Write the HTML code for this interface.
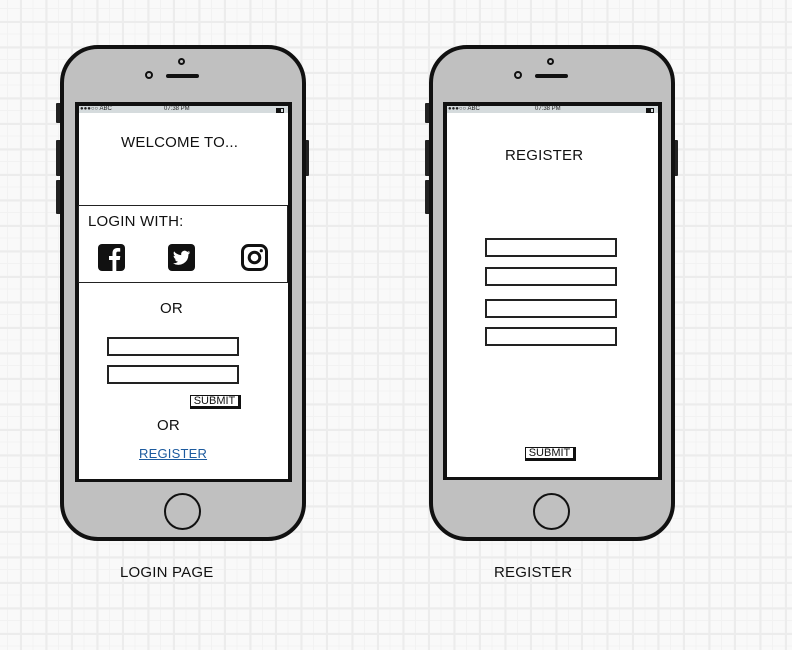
<!DOCTYPE html>
<html><head><meta charset="utf-8"><style>
*{margin:0;padding:0;box-sizing:border-box}
body{width:792px;height:650px;overflow:hidden;position:relative;font-family:"Liberation Sans",sans-serif;
background-color:#f9f9f9;
background-image:
linear-gradient(90deg,#ececec 2px,transparent 2px),
linear-gradient(#ececec 2px,transparent 2px),
linear-gradient(90deg,#f2f2f2 1px,transparent 1px),
linear-gradient(#f2f2f2 1px,transparent 1px);
background-size:25.5px 25.5px,25.5px 25.5px,12.75px 12.75px,12.75px 12.75px;
background-position:20px 21px,20px 21px,7px 8px,7px 8px;}
.a{position:absolute}
.phone{position:absolute;width:246px;height:496px;background:#c0c0c0;border:4px solid #111;border-radius:38px}
.btn{position:absolute;background:#222;border-radius:1px;width:5px}
.screen{position:absolute;background:#fff;border:4px solid #111;border-bottom-width:3px}
.sb{position:absolute;left:0;right:0;top:0;height:7px;background:#d5dbdd;font-size:6px;line-height:7px;color:#222}
.t{position:absolute;font-size:15px;color:#111;letter-spacing:0.2px;white-space:nowrap}
.field{position:absolute;border:2px solid #222;background:#fff}
.sub{position:absolute;border:1.5px solid #111;border-right-width:3px;border-bottom-width:3px;font-size:11px;line-height:11px;text-align:center;background:#fff;color:#111}
.home{position:absolute;width:37px;height:37px;border:2px solid #111;border-radius:50%}
</style></head><body>

<div class="btn" style="left:56px;top:103px;height:20px"></div>
<div class="btn" style="left:56px;top:140px;height:36px"></div>
<div class="btn" style="left:56px;top:180px;height:34px"></div>
<div class="btn" style="left:304px;top:140px;height:36px"></div>
<div class="phone" style="left:60px;top:45px"></div>
<div class="a" style="left:145px;top:71px;width:8px;height:8px;border:2px solid #111;border-radius:50%"></div>
<div class="a" style="left:166px;top:74px;width:33px;height:4px;background:#111;border-radius:2px"></div>
<div class="a" style="left:178px;top:58px;width:7px;height:7px;border:2px solid #111;border-radius:50%"></div>
<div class="screen" style="left:75px;top:102px;width:217px;height:380px">
 <div class="sb"><span style="position:absolute;left:1px">●●●○○ ABC</span><span style="position:absolute;left:85px">07:38 PM</span><span style="position:absolute;right:4px;top:1.5px;width:8px;height:5px;border:1px solid #111;background:linear-gradient(90deg,#111 70%,transparent 70%)"></span></div>
</div>
<div class="t" style="left:121px;top:134px">WELCOME TO...</div>
<div class="a" style="left:78px;top:205px;width:210px;height:78px;border:1.5px solid #222"></div>
<div class="t" style="left:88px;top:213px">LOGIN WITH:</div>
<svg class="a" style="left:98px;top:244px" width="27" height="27" viewBox="0 0 27 27"><rect width="27" height="27" rx="4" fill="#111"/><path d="M14.5 27V16h-3.5v-4h3.5V9c0-3.2 2-5 4.8-5 1.4 0 2.6.1 2.9.2v3.4h-2c-1.6 0-1.900.8-1.900 1.900V12h4l-.5 4h-3.5v11z" fill="#fff"/></svg>
<svg class="a" style="left:168px;top:244px" width="27" height="27" viewBox="0 0 27 27"><rect width="27" height="27" rx="4" fill="#111"/><path d="M22 8.3c-.6.3-1.3.5-2 .6.7-.4 1.3-1.1 1.5-1.9-.7.4-1.4.7-2.2.9a3.5 3.5 0 0 0-6 3.2c-2.9-.1-5.5-1.5-7.2-3.7-.9 1.6-.4 3.6 1.1 4.7-.6 0-1.1-.2-1.6-.4 0 1.7 1.2 3.2 2.8 3.5-.5.1-1.1.2-1.6.1.5 1.4 1.8 2.4 3.3 2.4A7 7 0 0 1 5 19.2a10 10 0 0 0 15.4-8.8c.6-.5 1.2-1.1 1.6-1.8z" fill="#fff"/></svg>
<svg class="a" style="left:241px;top:244px" width="27" height="27" viewBox="0 0 27 27"><rect x="1.5" y="1.5" width="24" height="24" rx="6" fill="none" stroke="#111" stroke-width="3"/><circle cx="13.5" cy="13.5" r="5.3" fill="none" stroke="#111" stroke-width="3"/><circle cx="20.3" cy="6.7" r="1.6" fill="#111"/></svg>
<div class="t" style="left:160px;top:300px">OR</div>
<div class="field" style="left:107px;top:337px;width:132px;height:19px"></div>
<div class="field" style="left:107px;top:365px;width:132px;height:19px"></div>
<div class="sub" style="left:190px;top:395px;width:51px;height:14px">SUBMIT</div>
<div class="t" style="left:157px;top:417px">OR</div>
<div class="a" style="left:139px;top:446px;font-size:13px;color:#1c5a9e;text-decoration:underline;letter-spacing:0.2px">REGISTER</div>
<div class="home" style="left:164px;top:493px"></div>

<div class="btn" style="left:425px;top:103px;height:20px"></div>
<div class="btn" style="left:425px;top:140px;height:36px"></div>
<div class="btn" style="left:425px;top:180px;height:34px"></div>
<div class="btn" style="left:673px;top:140px;height:36px"></div>
<div class="phone" style="left:429px;top:45px"></div>
<div class="a" style="left:514px;top:71px;width:8px;height:8px;border:2px solid #111;border-radius:50%"></div>
<div class="a" style="left:535px;top:74px;width:33px;height:4px;background:#111;border-radius:2px"></div>
<div class="a" style="left:547px;top:58px;width:7px;height:7px;border:2px solid #111;border-radius:50%"></div>
<div class="screen" style="left:443px;top:102px;width:219px;height:378px">
 <div class="sb"><span style="position:absolute;left:1px">●●●○○ ABC</span><span style="position:absolute;left:88px">07:38 PM</span><span style="position:absolute;right:4px;top:1.5px;width:8px;height:5px;border:1px solid #111;background:linear-gradient(90deg,#111 70%,transparent 70%)"></span></div>
</div>
<div class="t" style="left:505px;top:147px">REGISTER</div>
<div class="field" style="left:485px;top:238px;width:132px;height:19px"></div>
<div class="field" style="left:485px;top:267px;width:132px;height:19px"></div>
<div class="field" style="left:485px;top:299px;width:132px;height:19px"></div>
<div class="field" style="left:485px;top:327px;width:132px;height:19px"></div>
<div class="sub" style="left:525px;top:447px;width:51px;height:14px">SUBMIT</div>
<div class="home" style="left:533px;top:493px"></div>

<div class="t" style="left:120px;top:564px">LOGIN PAGE</div>
<div class="t" style="left:494px;top:564px">REGISTER</div>
</body></html>
